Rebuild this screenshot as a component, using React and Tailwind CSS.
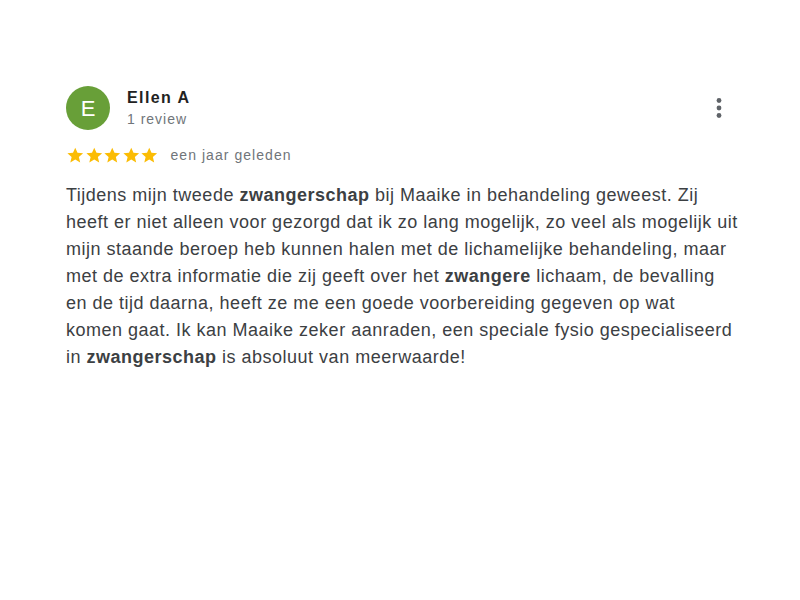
const Star = () => (
  <svg viewBox="0 0 24 24" className="w-[18.5px] h-[18.5px]" fill="#fbbc04">
    <path d="M12 2.2l2.9 6.7 7.3.6-5.5 4.8 1.7 7.1L12 17.6l-6.4 3.8 1.7-7.1-5.5-4.8 7.3-.6z" />
  </svg>
);

const Dots = () => (
  <svg viewBox="0 0 10 24" className="w-[10px] h-[24px]" fill="#5f6368">
    <circle cx="5" cy="4.5" r="2.4" />
    <circle cx="5" cy="12" r="2.4" />
    <circle cx="5" cy="19.5" r="2.4" />
  </svg>
);

export default function App() {
  return (
    <div className="w-[800px] h-[600px] bg-white font-['Liberation_Sans',Arial,sans-serif]">
      <div className="pt-[86px] pl-[66px] pr-[60px]">
        <div className="flex items-start">
          <div className="w-[44px] h-[44px] rounded-full bg-[#689f38] flex items-center justify-center text-white text-[22px] tracking-[1px] pl-[1px]">
            E
          </div>
          <div className="ml-[17px] pt-[2px] flex-1">
            <div className="text-[16px] font-bold text-[#222] leading-[20px] tracking-[1.4px]">Ellen A</div>
            <div className="text-[14px] text-[#70757a] leading-[20px] mt-[1px] tracking-[1px]">1 review</div>
          </div>
          <div className="mt-[10px] mr-[16px]">
            <Dots />
          </div>
        </div>
        <div className="flex items-center mt-[15px]">
          <div className="flex">
            <Star /><Star /><Star /><Star /><Star />
          </div>
          <span className="ml-[12px] text-[14px] text-[#70757a] tracking-[1.05px]">een jaar geleden</span>
        </div>
        <p className="mt-[16px] text-[18px] leading-[27px] text-[#3c4043] tracking-[0.5px] whitespace-nowrap">
          Tijdens mijn tweede <b>zwangerschap</b> bij Maaike in behandeling geweest. Zij<br />
          heeft er niet alleen voor gezorgd dat ik zo lang mogelijk, zo veel als mogelijk uit<br />
          mijn staande beroep heb kunnen halen met de lichamelijke behandeling, maar<br />
          met de extra informatie die zij geeft over het <b>zwangere</b> lichaam, de bevalling<br />
          en de tijd daarna, heeft ze me een goede voorbereiding gegeven op wat<br />
          komen gaat. Ik kan Maaike zeker aanraden, een speciale fysio gespecialiseerd<br />
          in <b>zwangerschap</b> is absoluut van meerwaarde!
        </p>
      </div>
    </div>
  );
}
